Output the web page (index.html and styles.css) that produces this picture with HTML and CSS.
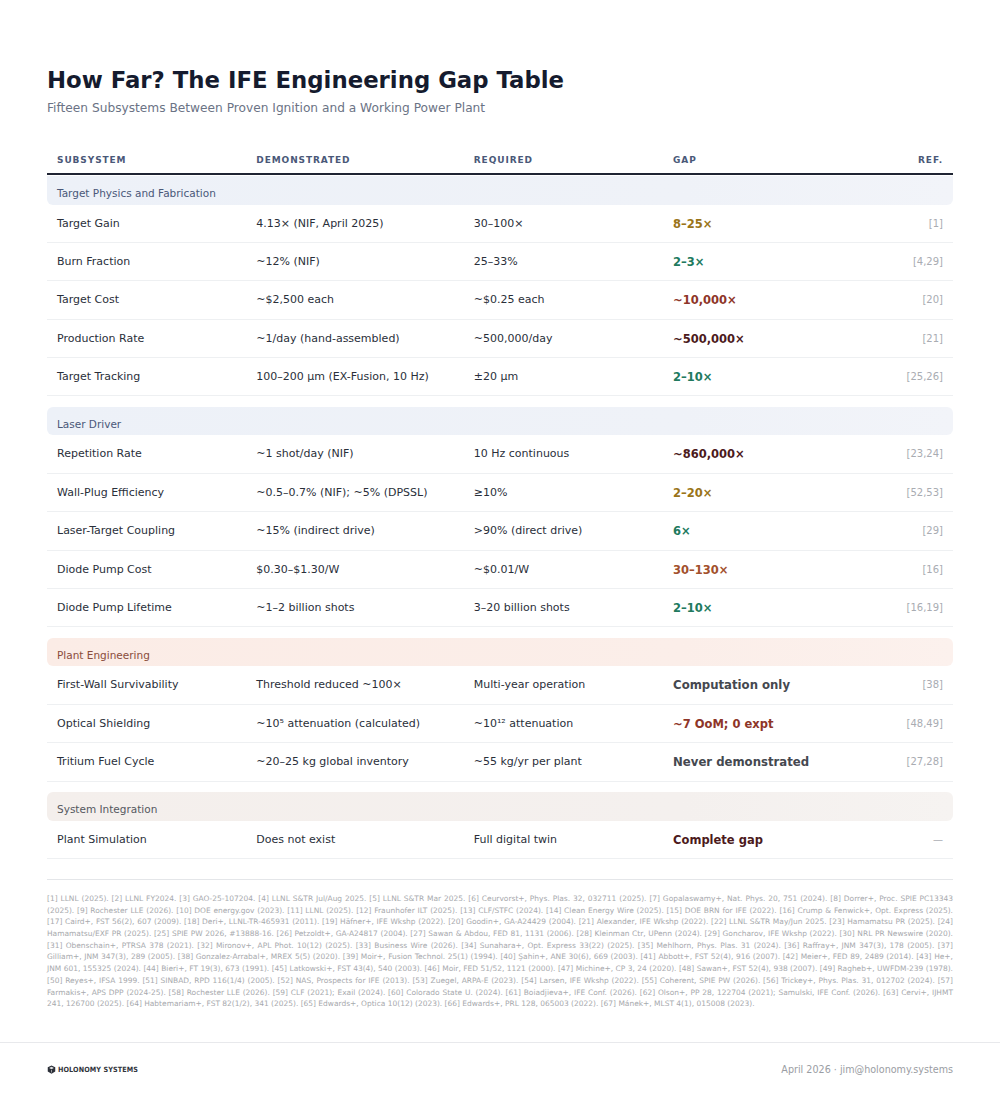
FILE: index.html
```html
<!DOCTYPE html>
<html lang="en">
<head>
<meta charset="utf-8">
<title>How Far? The IFE Engineering Gap Table</title>
<link rel="stylesheet" href="styles.css">
</head>
<body>
<main class="page">
  <header class="head">
    <h1 class="title">How Far? The IFE Engineering Gap Table</h1>
    <p class="subtitle">Fifteen Subsystems Between Proven Ignition and a Working Power Plant</p>
  </header>

  <section class="table">
    <div class="row thead">
      <div>Subsystem</div><div>Demonstrated</div><div>Required</div><div>Gap</div><div class="ref">Ref.</div>
    </div>

    <div class="group first">
      <div class="band band-blue">Target Physics and Fabrication</div>
      <div class="row"><div>Target Gain</div><div>4.13× (NIF, April 2025)</div><div>30–100×</div><div class="gap g-gold">8–25×</div><div class="ref">[1]</div></div>
      <div class="row"><div>Burn Fraction</div><div>~12% (NIF)</div><div>25–33%</div><div class="gap g-teal">2–3×</div><div class="ref">[4,29]</div></div>
      <div class="row"><div>Target Cost</div><div>~$2,500 each</div><div>~$0.25 each</div><div class="gap g-red">~10,000×</div><div class="ref">[20]</div></div>
      <div class="row"><div>Production Rate</div><div>~1/day (hand-assembled)</div><div>~500,000/day</div><div class="gap g-maroon">~500,000×</div><div class="ref">[21]</div></div>
      <div class="row"><div>Target Tracking</div><div>100–200 μm (EX-Fusion, 10 Hz)</div><div>±20 μm</div><div class="gap g-teal">2–10×</div><div class="ref">[25,26]</div></div>
    </div>

    <div class="group">
      <div class="band band-blue">Laser Driver</div>
      <div class="row"><div>Repetition Rate</div><div>~1 shot/day (NIF)</div><div>10 Hz continuous</div><div class="gap g-maroon">~860,000×</div><div class="ref">[23,24]</div></div>
      <div class="row"><div>Wall-Plug Efficiency</div><div>~0.5–0.7% (NIF); ~5% (DPSSL)</div><div>≥10%</div><div class="gap g-gold">2–20×</div><div class="ref">[52,53]</div></div>
      <div class="row"><div>Laser-Target Coupling</div><div>~15% (indirect drive)</div><div>&gt;90% (direct drive)</div><div class="gap g-teal">6×</div><div class="ref">[29]</div></div>
      <div class="row"><div>Diode Pump Cost</div><div>$0.30–$1.30/W</div><div>~$0.01/W</div><div class="gap g-rust">30–130×</div><div class="ref">[16]</div></div>
      <div class="row"><div>Diode Pump Lifetime</div><div>~1–2 billion shots</div><div>3–20 billion shots</div><div class="gap g-teal">2–10×</div><div class="ref">[16,19]</div></div>
    </div>

    <div class="group">
      <div class="band band-peach">Plant Engineering</div>
      <div class="row"><div>First-Wall Survivability</div><div>Threshold reduced ~100×</div><div>Multi-year operation</div><div class="gap g-grey">Computation only</div><div class="ref">[38]</div></div>
      <div class="row"><div>Optical Shielding</div><div>~10⁵ attenuation (calculated)</div><div>~10¹² attenuation</div><div class="gap g-red">~7 OoM; 0 expt</div><div class="ref">[48,49]</div></div>
      <div class="row"><div>Tritium Fuel Cycle</div><div>~20–25 kg global inventory</div><div>~55 kg/yr per plant</div><div class="gap g-grey">Never demonstrated</div><div class="ref">[27,28]</div></div>
    </div>

    <div class="group">
      <div class="band band-warm">System Integration</div>
      <div class="row"><div>Plant Simulation</div><div>Does not exist</div><div>Full digital twin</div><div class="gap g-maroon">Complete gap</div><div class="ref">—</div></div>
    </div>
  </section>

  <section class="refs">
    <p>[1] LLNL (2025). [2] LLNL FY2024. [3] GAO-25-107204. [4] LLNL S&amp;TR Jul/Aug 2025. [5] LLNL S&amp;TR Mar 2025. [6] Ceurvorst+, Phys. Plas. 32, 032711 (2025). [7] Gopalaswamy+, Nat. Phys. 20, 751 (2024). [8] Dorrer+, Proc. SPIE PC13343 (2025). [9] Rochester LLE (2026). [10] DOE energy.gov (2023). [11] LLNL (2025). [12] Fraunhofer ILT (2025). [13] CLF/STFC (2024). [14] Clean Energy Wire (2025). [15] DOE BRN for IFE (2022). [16] Crump &amp; Fenwick+, Opt. Express (2025). [17] Caird+, FST 56(2), 607 (2009). [18] Deri+, LLNL-TR-465931 (2011). [19] Häfner+, IFE Wkshp (2022). [20] Goodin+, GA-A24429 (2004). [21] Alexander, IFE Wkshp (2022). [22] LLNL S&amp;TR May/Jun 2025. [23] Hamamatsu PR (2025). [24] Hamamatsu/EXF PR (2025). [25] SPIE PW 2026, #13888-16. [26] Petzoldt+, GA-A24817 (2004). [27] Sawan &amp; Abdou, FED 81, 1131 (2006). [28] Kleinman Ctr, UPenn (2024). [29] Goncharov, IFE Wkshp (2022). [30] NRL PR Newswire (2020). [31] Obenschain+, PTRSA 378 (2021). [32] Mironov+, APL Phot. 10(12) (2025). [33] Business Wire (2026). [34] Sunahara+, Opt. Express 33(22) (2025). [35] Mehlhorn, Phys. Plas. 31 (2024). [36] Raffray+, JNM 347(3), 178 (2005). [37] Gilliam+, JNM 347(3), 289 (2005). [38] Gonzalez-Arrabal+, MREX 5(5) (2020). [39] Moir+, Fusion Technol. 25(1) (1994). [40] Şahin+, ANE 30(6), 669 (2003). [41] Abbott+, FST 52(4), 916 (2007). [42] Meier+, FED 89, 2489 (2014). [43] He+, JNM 601, 155325 (2024). [44] Bieri+, FT 19(3), 673 (1991). [45] Latkowski+, FST 43(4), 540 (2003). [46] Moir, FED 51/52, 1121 (2000). [47] Michine+, CP 3, 24 (2020). [48] Sawan+, FST 52(4), 938 (2007). [49] Ragheb+, UWFDM-239 (1978). [50] Reyes+, IFSA 1999. [51] SINBAD, RPD 116(1/4) (2005). [52] NAS, Prospects for IFE (2013). [53] Zuegel, ARPA-E (2023). [54] Larsen, IFE Wkshp (2022). [55] Coherent, SPIE PW (2026). [56] Trickey+, Phys. Plas. 31, 012702 (2024). [57] Farmakis+, APS DPP (2024-25). [58] Rochester LLE (2026). [59] CLF (2021); Exail (2024). [60] Colorado State U. (2024). [61] Boiadjieva+, IFE Conf. (2026). [62] Olson+, PP 28, 122704 (2021); Samulski, IFE Conf. (2026). [63] Cervi+, IJHMT 241, 126700 (2025). [64] Habtemariam+, FST 82(1/2), 341 (2025). [65] Edwards+, Optica 10(12) (2023). [66] Edwards+, PRL 128, 065003 (2022). [67] Mánek+, MLST 4(1), 015008 (2023).</p>
  </section>
</main>

<footer class="footer">
  <div class="logo">
    <svg class="logo-mark" viewBox="0 0 12 12" width="9" height="9" aria-hidden="true">
      <path d="M6 0.5 L11 3 L11 8.5 L6 11.5 L1 8.5 L1 3 Z" fill="#2b2f38"/>
      <path d="M6 2.2 L9.2 4 L6 5.8 L2.8 4 Z" fill="#ffffff" opacity="0.85"/>
      <path d="M6 6.6 L6 10" stroke="#ffffff" stroke-width="1" opacity="0.7"/>
    </svg>
    <span class="logo-text">HOLONOMY SYSTEMS</span>
  </div>
  <div class="contact">April 2026 · jim@holonomy.systems</div>
</footer>
</body>
</html>
```

FILE: styles.css
```css
html, body {
  margin: 0;
  padding: 0;
  background: #ffffff;
}

body {
  font-family: "DejaVu Sans", "Noto Sans", sans-serif;
  color: #2a2f3a;
}

.page {
  padding: 64px 47px 0 47px;
}

.title {
  margin: 0;
  font-size: 22.8px;
  line-height: 32px;
  font-weight: 700;
  color: #151b2e;
}

.subtitle {
  margin: 4px 0 0 0;
  font-size: 12.2px;
  line-height: 16px;
  color: #6b7385;
}

.table {
  margin-top: 29px;
}

.row {
  display: grid;
  grid-template-columns: 22% 24% 22% 22% 10%;
  align-items: center;
  border-bottom: 1px solid #eef0f2;
  font-size: 11px;
  line-height: 14px;
}

.row > div {
  padding: 12px 10px 11.4px 10px;
  white-space: nowrap;
}

.row .ref {
  text-align: right;
  color: #a9acb2;
  font-size: 10px;
}

.thead {
  border-bottom: 2px solid #1f2433;
  font-size: 9px;
  font-weight: 700;
  letter-spacing: 0.9px;
  text-transform: uppercase;
  color: #4a5878;
}

.thead > div {
  padding: 8px 10px 6px 10px;
}

.thead .ref {
  font-size: 9px;
  color: #4a5878;
  letter-spacing: 0.9px;
}

.group {
  margin-top: 10.5px;
}

.group.first {
  margin-top: 1px;
}

.band {
  padding: 11px 10px 4.5px 10px;
  line-height: 13px;
  font-size: 10.5px;
  border-radius: 6px;
}

.group.first .band {
  border-radius: 0 0 6px 6px;
}

.band-blue {
  background: linear-gradient(90deg, #edf1f8 0%, #eff2f8 70%, #f2f4f9 100%);
  color: #4a5878;
}

.band-peach {
  background: linear-gradient(90deg, #fbece6 0%, #fbeee9 70%, #fcf1ed 100%);
  color: #8a4c3c;
}

.band-warm {
  background: linear-gradient(90deg, #f4efec 0%, #f4f0ee 70%, #f6f3f1 100%);
  color: #55585f;
}

.gap {
  font-weight: 700;
  font-size: 11.5px;
}

.g-gold { color: #9a7418; }
.g-teal { color: #217a5e; }
.g-red { color: #8e3528; }
.g-maroon { color: #4c1a1c; }
.g-rust { color: #a2502c; }
.g-grey { color: #45484f; font-size: 11.7px; }

.refs {
  margin-top: 20px;
  border-top: 1px solid #e4e6e9;
  padding-top: 13px;
}

.refs p {
  margin: 0;
  font-size: 7.48px;
  line-height: 11.7px;
  color: #a7a9ad;
  text-align: justify;
}

.footer {
  margin-top: 32px;
  border-top: 1px solid #e8e9ec;
  padding: 0 47px;
  height: 52px;
  display: flex;
  align-items: center;
  justify-content: space-between;
}

.logo {
  display: flex;
  align-items: center;
  gap: 2px;
}

.logo-mark {
  display: block;
}

.logo-text {
  font-family: "DejaVu Sans", sans-serif;
  font-stretch: condensed;
  font-weight: 700;
  font-size: 7.2px;
  letter-spacing: 0.1px;
  color: #30343c;
}

.contact {
  font-size: 9.6px;
  color: #9a9da3;
}
```
